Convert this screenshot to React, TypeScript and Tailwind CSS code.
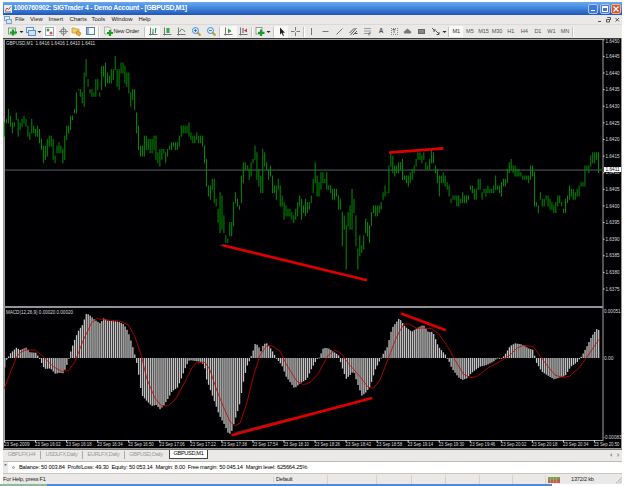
import type { ReactNode } from "react";

// [high, low] per one-minute bar, in pips above 1.6400
const bars: [number, number][] = [
  [25, 21], [26, 25], [29, 25], [27, 24], [25, 22], [25, 24], [28, 26], [26, 21], [25, 23], [26, 24],
  [27, 25], [26, 24], [24, 21], [22, 20], [26, 22], [24, 22], [23, 21], [24, 21], [23, 19], [20, 17],
  [18, 13], [18, 14], [20, 15], [21, 18], [21, 18], [20, 14], [15, 13], [18, 16], [19, 16], [18, 16],
  [17, 13], [21, 14], [24, 20], [24, 22], [27, 23], [27, 26], [29, 28], [34, 28], [35, 35], [35, 33],
  [34, 31], [40, 30], [44, 39], [38, 36], [35, 34], [35, 33], [34, 33], [38, 33], [38, 35], [34, 33],
  [42, 35], [42, 39], [43, 36], [40, 37], [39, 37], [41, 37], [41, 38], [45, 41], [41, 36], [41, 35],
  [43, 40], [43, 40], [42, 37], [40, 36], [40, 34], [34, 30], [35, 32], [35, 29], [28, 22], [24, 17],
  [18, 15], [18, 15], [21, 15], [21, 17], [20, 17], [20, 16], [20, 16], [21, 17], [21, 14], [16, 13],
  [17, 12], [17, 14], [17, 16], [16, 13], [17, 15], [18, 17], [19, 17], [19, 18], [19, 17], [19, 17],
  [21, 18], [24, 21], [24, 22], [24, 22], [24, 22], [25, 21], [22, 20], [21, 19], [21, 19], [22, 20],
  [21, 19], [21, 19], [21, 18], [18, 13], [14, 6], [6, 3], [6, 2], [8, 5], [8, 1], [2, 0],
  [-1, -5], [4, -8], [3, -7], [-3, -8], [-9, -11], [-10, -11], [-5, -9], [-5, -9], [1, -6], [4, 1],
  [2, 0], [0, -1], [9, 1], [13, 7], [13, 11], [12, 11], [11, 8], [13, 9], [14, 13], [18, 14],
  [16, 8], [11, 6], [9, 4], [17, 4], [16, 12], [13, 11], [11, 8], [12, 9], [9, 4], [6, 4],
  [6, 2], [8, 5], [6, 0], [3, 0], [1, -4], [0, -3], [-1, -3], [-1, -3], [-2, -4], [-3, -5],
  [-1, -4], [1, -3], [3, 0], [2, -4], [0, -2], [2, -3], [1, -2], [1, -1], [3, 1], [8, 4],
  [13, 7], [9, 3], [7, 3], [10, 5], [10, 7], [8, 7], [10, 5], [6, 5], [6, 4], [5, 2],
  [5, 2], [5, 3], [3, -1], [2, -1], [-2, -12], [-3, -7], [-6, -19], [-2, -6], [0, -7], [5, -7],
  [2, -2], [-3, -12], [-13, -19], [-9, -15], [-12, -14], [-9, -13], [-4, -8], [-5, -9], [-6, -11], [-2, -6],
  [0, -2], [0, -3], [0, -3], [0, -2], [1, -1], [4, 2], [6, 3], [4, 4], [12, 4], [16, 12],
  [15, 10], [12, 9], [12, 10], [13, 10], [13, 11], [14, 8], [9, 8], [9, 7], [9, 6], [10, 7],
  [11, 8], [12, 10], [14, 12], [16, 14], [16, 14], [15, 13], [16, 14], [13, 11], [12, 11], [14, 11],
  [17, 13], [16, 13], [12, 10], [11, 7], [9, 3], [9, 7], [10, 7], [9, 6], [7, 5], [6, 3],
  [2, 1], [3, 2], [3, 2], [3, 0], [3, 0], [2, 1], [4, 1], [3, 1], [3, 1], [3, 2],
  [6, 5], [6, 4], [5, 2], [5, 2], [8, 5], [8, 5], [4, 2], [5, 4], [5, 3], [6, 4],
  [5, 4], [5, 4], [6, 4], [9, 5], [6, 5], [6, 4], [7, 3], [8, 6], [8, 6], [11, 7],
  [13, 10], [14, 11], [12, 10], [12, 9], [11, 9], [11, 9], [10, 9], [9, 8], [9, 8], [9, 8],
  [9, 7], [12, 8], [12, 9], [10, 0], [1, 0], [0, -2], [4, 2], [2, 0], [2, 0], [3, 2],
  [3, 0], [2, -1], [1, -1], [0, -2], [1, -2], [3, 0], [3, 1], [1, 0], [-1, -2], [2, -2],
  [3, 1], [6, 2], [5, 3], [5, 2], [4, 2], [5, 3], [6, 3], [7, 6], [7, 6], [12, 6],
  [12, 11], [12, 10], [15, 12], [16, 13], [16, 13], [16, 14], [16, 10],
];

type Point = [number, number];

const shift = (points: Point[], dx: number): Point[] => points.map(([x, y]) => [x + dx, y]);
const toPane = (points: Point[]): Point[] => points.map(([x, y]) => [x / 3, 300 + y / 3]);

const macd = toPane([
  [13, 205], [19, 180], [25, 170], [31, 160], [49, 143], [60, 150], [78, 143], [90, 157], [108, 158],
  [119, 178], [131, 203], [137, 207], [151, 205], [166, 222], [178, 218], [190, 220], [200, 195],
  [213, 150], [225, 115], [236, 90], [247, 75], [258, 42], [266, 43], [282, 58], [300, 70], [311, 55],
  [323, 62], [355, 65], [371, 73], [384, 95], [395, 130], [407, 175], [413, 205], [419, 250],
  [425, 285], [437, 300], [455, 318], [468, 315], [480, 328], [490, 318], [503, 297], [515, 275],
  [533, 262], [545, 232], [557, 200], [568, 180], [590, 184],
  ...shift([
    [0, 185], [12, 195], [18, 235], [28, 262], [45, 310], [57, 345], [75, 378], [85, 402], [93, 400],
    [100, 375], [118, 315], [130, 245], [140, 200], [150, 178], [158, 155], [165, 132], [173, 135],
    [183, 155], [190, 132], [200, 130], [215, 150], [230, 177], [245, 195], [258, 230], [283, 265],
    [300, 250], [320, 238], [335, 205], [350, 178], [358, 172], [370, 143], [385, 145], [400, 155],
    [415, 165], [425, 200], [438, 237], [450, 225], [460, 213], [470, 245], [485, 287], [495, 280],
    [510, 260], [525, 210], [540, 180], [550, 160], [562, 140], [575, 85], [597, 55],
  ], 600),
  ...shift([
    [0, 58], [15, 80], [35, 95], [55, 82], [70, 75], [85, 97], [98, 95], [115, 140], [135, 163],
    [145, 180], [155, 205], [175, 232], [187, 240], [200, 235], [215, 218], [240, 200], [260, 195],
    [280, 185], [293, 173], [300, 177], [312, 168], [330, 138], [345, 130], [365, 133], [385, 145],
    [400, 150], [407, 185], [425, 215], [445, 228], [462, 238], [480, 232], [495, 228], [512, 200],
    [530, 188], [545, 168], [560, 140], [575, 108], [590, 87], [600, 92],
  ], 1200),
]);

const signal = toPane([
  [13, 265], [30, 220], [50, 170], [62, 157], [75, 150], [105, 150], [130, 170], [160, 200], [185, 214],
  [205, 212], [225, 185], [250, 120], [275, 68], [290, 56], [320, 60], [360, 63], [385, 75],
  [405, 110], [425, 170], [440, 235], [465, 295], [485, 318], [505, 317], [525, 300], [550, 255],
  [575, 205], [588, 189],
  ...shift([
    [0, 187], [15, 187], [30, 210], [50, 270], [70, 320], [90, 365], [105, 377], [120, 370],
    [140, 310], [160, 230], [180, 165], [200, 138], [215, 137], [240, 153], [260, 195], [290, 243],
    [310, 254], [330, 248], [355, 220], [385, 165], [405, 150], [425, 162], [445, 190], [480, 230],
    [505, 262], [520, 265], [540, 240], [565, 175], [590, 110],
  ], 600),
  ...shift([
    [0, 92], [12, 72], [28, 72], [50, 85], [70, 84], [95, 86], [115, 100], [145, 143], [165, 180],
    [190, 222], [210, 233], [230, 230], [265, 203], [300, 185], [330, 165], [350, 145], [370, 136],
    [400, 140], [415, 160], [440, 195], [465, 225], [490, 233], [510, 228], [540, 200], [565, 165],
    [597, 118],
  ], 1200),
]);

const barX = (i: number) => 4.09 + i * 1.941;
const priceY = (pips: number) => 172.7 - (pips - 10) * 3.323;

const valueAt = (points: Point[], x: number) => {
  const next = points.findIndex(([px]) => px >= x);
  if (next <= 0) return points[next === 0 ? 0 : points.length - 1][1];
  const [x0, y0] = points[next - 1];
  const [x1, y1] = points[next];
  return y0 + ((y1 - y0) * (x - x0)) / (x1 - x0);
};

const prices = Array.from({ length: 16 }, (_, i) => 50 - i * 5);

const times = Array.from({ length: 20 }, (_, i) => {
  if (i === 0) return "23 Sep 2009";
  const minutes = 16 * 60 + 2 + (i - 1) * 16;
  return `23 Sep ${Math.floor(minutes / 60)}:${String(minutes % 60).padStart(2, "0")}`;
});

const Chart = () => (
  <svg width="619" height="411" viewBox="3 38 619 411" className="block font-['Liberation_Sans',sans-serif] text-[5px]">
    <rect x="3" y="38" width="619" height="411" fill="#9c9a98" />
    <rect x="3" y="38" width="618" height="1" fill="#3c3c3c" />
    <rect x="4" y="39" width="617" height="409" fill="#000003" />

    {/* Pane frames */}
    <g fill="#a2a2a2">
      <rect x="4" y="39" width="599" height="1" />
      <rect x="4" y="39" width="1" height="401" />
      <rect x="602.5" y="39" width="1" height="402" />
      <rect x="4" y="306" width="599" height="2" fill="#92929a" />
      <rect x="4" y="440" width="599" height="1" />
    </g>
    <rect x="5" y="169.3" width="598" height="1.6" fill="#333e3e" />

    {bars.map(([high, low], i) => (
      <rect key={i} x={barX(i)} y={priceY(high) - 0.5} width="1" height={(high - low) * 3.323 + 1} fill="#008c00" />
    ))}

    {/* MACD histogram and signal line */}
    {bars.map((_, i) => {
      const y = valueAt(macd, barX(i) + 0.5);
      return (
        <rect key={i} x={barX(i)} y={Math.min(y, 358)} width="1.3" height={Math.max(Math.abs(y - 358), 0.8)} fill="#c4c4c4" />
      );
    })}
    <polyline points={signal.map((p) => p.join(",")).join(" ")} fill="none" stroke="#d00000" strokeWidth="0.8" />

    {/* Divergence lines */}
    <path d="M220 245.3h4" stroke="#20705c" strokeWidth="0.8" />
    <path d="M235 432.6L292 418" stroke="#20705c" strokeWidth="0.6" />
    <g stroke="#dc0000" strokeWidth="2.7">
      <path d="M222.5 245.2L367 280.2" />
      <path d="M389 152.6L443.5 148.4" />
      <path d="M231.5 435.2L372.3 398" />
      <path d="M401 313.6L446 330.2" />
    </g>

    <g fill="#dcdcdc">
      {prices.map((p) => (
        <g key={p}>
          <rect x="603" y={priceY(p) - 0.5} width="1.5" height="1" />
          <text x="605.5" y={Math.max(priceY(p) + 1.7, 42.8)} textLength="14" lengthAdjust="spacingAndGlyphs">
            {(1.64 + p / 10000).toFixed(4)}
          </text>
        </g>
      ))}
      <rect x="604" y="167" width="17" height="5" fill="#fff" />
      <text x="605.5" y="171.4" textLength="14" lengthAdjust="spacingAndGlyphs" fill="#000">1.6411</text>
      <text x="604" y="312.8" textLength="16.5" lengthAdjust="spacingAndGlyphs">0.00051</text>
      <text x="604" y="359.8" textLength="9.5" lengthAdjust="spacingAndGlyphs">0.00</text>
      <text x="603.5" y="439" textLength="18" lengthAdjust="spacingAndGlyphs">-0.00083</text>
      {times.map((t, i) => (
        <g key={t}>
          <rect x={4 + i * 31.05} y="440" width="1" height="2.5" />
          <text x={4 + i * 31.05} y="446.4" textLength="25.5" lengthAdjust="spacingAndGlyphs">{t}</text>
        </g>
      ))}
      <text x="6" y="45.4" textLength="89" lengthAdjust="spacingAndGlyphs" xmlSpace="preserve">
        GBPUSD,M1  1.6416 1.6416 1.6410 1.6411
      </text>
      <text x="6" y="313.8" textLength="67" lengthAdjust="spacingAndGlyphs">MACD(12,26,9) 0.00020 0.00020</text>
    </g>
  </svg>
);

const Icon = ({ children, w = 11 }: { children: ReactNode; w?: number }) => (
  <svg width={w} height="11" viewBox={`0 0 ${w} 11`} fill="none" className="shrink-0">
    {children}
  </svg>
);

const Sep = () => <span className="h-[10px] w-[2px] shrink-0 border-r border-white bg-[#c5c2bb]" />;

const axes = <path d="M2.5 1.5V9.5M1 8.5H9.5" stroke="#777" />;

// Each slot is one toolbar button with its width in pixels
const tools: { w: string; active?: boolean; icon: ReactNode }[] = [
  { w: "w-[18.5px]", icon: <Icon w={17}><rect x="1.5" y="2" width="7" height="6" fill="#dff0df" stroke="#8a9a8a" /><path d="M6 3.5v6M3 6.5h7" stroke="#13a022" strokeWidth="2.2" /><path d="M12.5 5h4l-2 2z" fill="#222" /></Icon> },
  { w: "w-[18.5px]", icon: <Icon w={17}><rect x="1.5" y="1.5" width="7" height="5" fill="#e8f2fb" stroke="#5d8fc9" /><rect x="3.5" y="4.5" width="7" height="5" fill="#cfe2f5" stroke="#5d8fc9" /><path d="M12.5 5h4l-2 2z" fill="#222" /></Icon> },
  { w: "w-[13px]", active: true, icon: <Icon><rect x="1.5" y="1.5" width="8" height="8" fill="#fff" stroke="#8fa9c4" /><circle cx="4" cy="4" r="1.5" fill="#3aa33c" /><circle cx="7" cy="7" r="1.5" fill="#df5330" /></Icon> },
  { w: "w-[14px]", icon: <Icon><circle cx="5.5" cy="5.5" r="2.7" stroke="#777" /><path d="M5.5 1v9M1 5.5h9" stroke="#777" strokeWidth="0.8" /></Icon> },
  { w: "w-[13.5px]", active: true, icon: <Icon><path d="M1 2h3l1 1h3v4H1z" fill="#f4cf63" stroke="#c48e2c" strokeWidth="0.7" /><path d="M6 5l4 2-1.5 3L5 8z" fill="#f0b03c" stroke="#b77d22" strokeWidth="0.7" /></Icon> },
  { w: "w-[14px]", active: true, icon: <Icon><rect x="1.5" y="1.5" width="8" height="7" fill="#fff" stroke="#4f7fbb" /><rect x="2" y="2" width="2" height="6" fill="#8fb4de" /></Icon> },
];

const chartTools: { w: string; active?: boolean; icon: ReactNode }[] = [
  { w: "w-[14px]", active: true, icon: <Icon>{axes}<path d="M5 3v5M4 7h1M7.5 2v5M7.5 3h1" stroke="#2c9a46" /></Icon> },
  { w: "w-[14px]", icon: <Icon>{axes}<rect x="4.5" y="2" width="3" height="5" fill="#2fa84a" /></Icon> },
  { w: "w-[15px]", icon: <Icon>{axes}<path d="M3.5 6l2-3 2 1 1.5 2" stroke="#5a9a66" /></Icon> },
  { w: "w-[15px]", icon: <Icon><path d="M6.5 6.5L9.5 9.5" stroke="#c99a2b" strokeWidth="2" /><circle cx="4.5" cy="4.5" r="3" fill="#d8ebfb" stroke="#4a8cd2" /><path d="M3 4.5h3M4.5 3v3" stroke="#2766ad" strokeWidth="0.8" /></Icon> },
  { w: "w-[14.5px]", icon: <Icon><path d="M6.5 6.5L9.5 9.5" stroke="#c99a2b" strokeWidth="2" /><circle cx="4.5" cy="4.5" r="3" fill="#d8ebfb" stroke="#4a8cd2" /><path d="M3 4.5h3" stroke="#2766ad" strokeWidth="0.8" /></Icon> },
];

const drawTools: { w: string; icon: ReactNode }[] = [
  { w: "w-[14px]", icon: <Icon><path d="M5.5 2v7" stroke="#777" /></Icon> },
  { w: "w-[14px]", icon: <Icon><path d="M2.5 5.5h6" stroke="#777" /></Icon> },
  { w: "w-[14px]", icon: <Icon><path d="M2.5 8.5l6-6" stroke="#777" /></Icon> },
  { w: "w-[14px]", icon: <Icon><path d="M1.5 7l5-5M2.5 9l6-7M5 9l4-4M6.5 7.5h3" stroke="#555" /></Icon> },
  { w: "w-[14px]", icon: <Icon><path d="M2 2.5h7M2 5h7M2 7.5h5" stroke="#888" strokeWidth="0.8" /><path d="M7 9.5V7h2" stroke="#666" /></Icon> },
  { w: "w-[13px]", icon: <span className="text-[6.5px] font-bold text-[#555]">A</span> },
  { w: "w-[13px]", icon: <span className="flex h-[7px] w-[7px] items-center justify-center border border-dotted border-[#888] text-[5.5px] font-bold text-[#666]">T</span> },
  { w: "w-[14px]", icon: <Icon><path d="M5.5 2.5l4 3.5-1 1.5h-6L1.5 6z" fill="#777" /></Icon> },
  { w: "w-[14px]", icon: <Icon><rect x="2.5" y="3.5" width="6" height="4" fill="#888" stroke="#666" /></Icon> },
  { w: "w-[19px]", icon: <Icon w={17}><path d="M2 2l3 3M5 3v2H3M6 5l3 3M9 6v2.5H6.5" stroke="#555" /><path d="M12.5 5h4l-2 2z" fill="#222" /></Icon> },
];

const Slot = ({ w, active, children }: { w: string; active?: boolean; children: ReactNode }) => (
  <span className={`flex h-[12px] shrink-0 items-center justify-center ${w} ${active ? "bg-[#f8f8f6]" : ""}`}>
    {children}
  </span>
);

const menu = [
  { label: "File", w: "w-[15px]" },
  { label: "View", w: "w-[18.5px]" },
  { label: "Insert", w: "w-[21px]" },
  { label: "Charts", w: "w-[22px]" },
  { label: "Tools", w: "w-[20px]" },
  { label: "Window", w: "w-[27px]" },
  { label: "Help", w: "w-[14px]" },
];

const periods = ["M1", "M5", "M15", "M30", "H1", "H4", "D1", "W1", "MN"];

const TitleBar = () => (
  <div className="flex h-[13px] items-center bg-linear-to-b from-[#6aa9ee] via-[#3f84dc] to-[#2454b4] px-[1px]">
    <svg width="8" height="8" viewBox="0 0 8 8" className="shrink-0">
      <rect width="8" height="8" fill="#e9edf2" />
      <path d="M1 6l2-3 1.5 1.5L7 1.5" stroke="#d0392b" fill="none" />
      <path d="M1 7h6" stroke="#48719f" />
    </svg>
    <span className="ml-[1.5px] text-[6.8px] leading-none font-bold tracking-[-0.22px] whitespace-pre text-white">
      1000760902: SIGTrader 4 - Demo Account - [GBPUSD,M1]
    </span>
    <div className="ml-auto flex gap-[1.5px]">
      <span className="flex h-[10px] w-[10px] items-end rounded-[2px] border border-[#a9c8f2] bg-[#3f78d6] p-[1.5px]">
        <span className="h-[1.5px] w-[4px] bg-white" />
      </span>
      <span className="h-[10px] w-[10px] rounded-[2px] border border-[#a9c8f2] bg-[#3f78d6] p-[1px]">
        <span className="block h-[6px] w-[6px] border border-t-2 border-white" />
      </span>
      <span className="flex h-[10px] w-[10px] items-center justify-center rounded-[2px] border border-[#eeb5a0] bg-[#d9532f]">
        <svg width="6" height="6" viewBox="0 0 6 6"><path d="M0.5 0.5l5 5M5.5 0.5l-5 5" stroke="#fff" strokeWidth="1.3" /></svg>
      </span>
    </div>
  </div>
);

const App = () => (
  <div className="h-[486px] w-[625px] overflow-hidden bg-white pt-[2px] font-['Liberation_Sans',sans-serif] text-[5.9px] leading-none text-[#222]">
    <div className="ml-[3px] flex w-[619px] flex-col bg-[#ebe9e7]">
      <TitleBar />

      {/* Menu */}
      <div className="flex h-[10px] items-center border-b border-[#dcd8d4] pr-[2px] pl-[1px]">
        <svg width="9" height="8" viewBox="0 0 9 8" className="mr-[2px] shrink-0">
          <rect x="0.5" y="0.5" width="5" height="4" fill="#e6f0fa" stroke="#7ba3cf" />
          <rect x="2.5" y="3.5" width="5" height="4" fill="#d5e6f6" stroke="#7ba3cf" />
        </svg>
        {menu.map((m) => (
          <span key={m.label} className={`shrink-0 ${m.w}`}>{m.label}</span>
        ))}
        <svg width="24" height="7" viewBox="0 0 24 7" fill="none" stroke="#555" className="ml-auto">
          <path d="M2 5.5h3M10.5 3.5h3v2.5h-3zM11.5 2V1.5h3V4M19.5 2l3.5 3.5M23 2l-3.5 3.5" />
        </svg>
      </div>

      {/* Toolbar */}
      <div className="flex h-[13px] items-center pl-[3px]">
        {tools.map((t, i) => (
          <Slot key={i} w={t.w} active={t.active}>{t.icon}</Slot>
        ))}
        <Sep />
        <div className="flex w-[44.5px] shrink-0 items-center pl-[3px]">
          <Icon>
            <path d="M1.5 1h5l1.5 2v5H1.5z" fill="#eee" stroke="#999" strokeWidth="0.7" />
            <path d="M7 4v6M4 7h6" stroke="#15a024" strokeWidth="2.2" />
          </Icon>
          <span className="text-[5.6px] tracking-[-0.18px] whitespace-nowrap">New Order</span>
        </div>
        <Sep />
        {chartTools.map((t, i) => (
          <Slot key={i} w={t.w} active={t.active}>{t.icon}</Slot>
        ))}
        <Sep />
        <Slot w="w-[16px]" active>
          <Icon>{axes}<path d="M5 2.5v5L8.5 5z" fill="#2aa23d" /></Icon>
        </Slot>
        <Slot w="w-[14px]">
          <Icon>{axes}<path d="M5 2v5" stroke="#555" /><path d="M9 2.5v4L6 4.5z" fill="#c24131" /></Icon>
        </Slot>
        <Sep />
        <Slot w="w-[20px]">
          <Icon w={17}>
            <rect x="2" y="1.5" width="6" height="6.5" fill="#f6f6f6" stroke="#888" strokeWidth="0.8" />
            <path d="M7 3.5v6.5M4 6.8h6.5" stroke="#15a024" strokeWidth="2.2" />
            <path d="M12.5 5h4l-2 2z" fill="#222" />
          </Icon>
        </Slot>
        <Sep />
        <Slot w="w-[13px]" active>
          <Icon><path d="M4 1.5v7l1.7-1.5 1.3 3 1-.5-1.3-2.7h2.3z" fill="#222" /></Icon>
        </Slot>
        <Slot w="w-[15px]">
          <Icon><path d="M5.5 1v3.5M5.5 6.5V10M1 5.5h3.5M6.5 5.5H10" stroke="#777" /></Icon>
        </Slot>
        <Sep />
        {drawTools.map((t, i) => (
          <Slot key={i} w={t.w}>{t.icon}</Slot>
        ))}
        <Sep />
        {periods.map((p) => (
          <span
            key={p}
            className={`flex h-[11px] w-[13.6px] shrink-0 items-center justify-center text-[5.6px] tracking-[-0.1px] ${p === "M1" ? "bg-[#f8f8f6] text-[#333]" : "text-[#555]"}`}
          >
            {p}
          </span>
        ))}
        <Sep />
      </div>

      <Chart />

      {/* Chart tabs */}
      <div className="flex h-[12px] items-start border-t border-[#777] text-[5.6px] tracking-[-0.35px] text-[#9a9896]">
        {["GBPLFX,H4", "USDLFX,Daily", "EURLFX,Daily", "GBPUSD,Daily"].map((t, i) => (
          <span
            key={t}
            className={`mt-[1px] flex h-[8px] shrink-0 items-center justify-center ${i === 0 ? "w-[38px]" : "w-[42px]"} ${i === 3 ? "" : "border-r border-[#aaa]"}`}
          >
            {t}
          </span>
        ))}
        <span className="ml-[2px] flex h-[9px] w-[39px] items-center justify-center border border-t-0 border-[#444] bg-white text-black">
          GBPUSD,M1
        </span>
        <svg width="14" height="8" viewBox="0 0 14 8" className="mt-[1px] ml-auto" fill="#999">
          <path d="M4 2v4L2 4zM9.5 2v4l2-2z" />
        </svg>
      </div>

      {/* Terminal */}
      <div className="flex h-[12px] items-center border-t border-[#bbb]">
        <span className="flex h-full w-[5px] flex-col items-center pt-[1px] text-[4px] font-bold">×</span>
        <div className="flex h-[11px] flex-1 items-center bg-white pl-[4px] text-black">
          <span className="mr-[4px] h-[3px] w-[3px] rounded-full border border-[#999] bg-[#ddd]" />
          <span className="text-[5.7px] tracking-[-0.18px] whitespace-nowrap">
            Balance: 50 003.84&nbsp; Profit/Loss: 49.30&nbsp; Equity: 50 053.14&nbsp; Margin: 8.00&nbsp; Free margin: 50 045.14&nbsp; Margin level: 625664.25%
          </span>
        </div>
      </div>

      {/* Status bar */}
      <div className="flex h-[11px] items-center border-t border-[#c9c6c2] pt-[1px] text-[5.6px] tracking-[-0.2px]">
        <span className="w-[270px]">For Help, press F1</span>
        <span className="w-[54px] border-l border-[#d6d3cf] pl-[2px]">Default</span>
        {["w-[49px]", "w-[35px]", "w-[34px]", "w-[34px]", "w-[33px]", "w-[33px]"].map((w, i) => (
          <span key={i} className={`h-[9px] shrink-0 border-l border-[#d6d3cf] ${w}`} />
        ))}
        <span className="flex h-[9px] w-[19px] items-center border-l border-[#d6d3cf] pl-[2px]">
          <svg width="12" height="6" viewBox="0 0 12 6">
            <rect width="12" height="6" fill="#c4584a" />
            <path d="M0 0h12v2L8 3H4L0 4z" fill="#7d9a4e" />
            <path d="M2.5 0v6M5.5 0v6M8.5 0v6" stroke="#b9ad7c" strokeWidth="0.7" />
          </svg>
        </span>
        <span className="flex-1 pl-[7px] whitespace-nowrap">1372/2 kb</span>
        <svg width="6" height="9" viewBox="0 0 6 9" stroke="#aaa"><path d="M0 8.5L6 2.5M3 8.5l3-3" /></svg>
      </div>
    </div>

    {/* Top edge of the taskbar */}
    <div className="flex h-[2px] w-[552px] bg-[#4f8ad8]">
      <span className="w-[47px] bg-[#8fb79a]" />
    </div>
  </div>
);

export default App;
